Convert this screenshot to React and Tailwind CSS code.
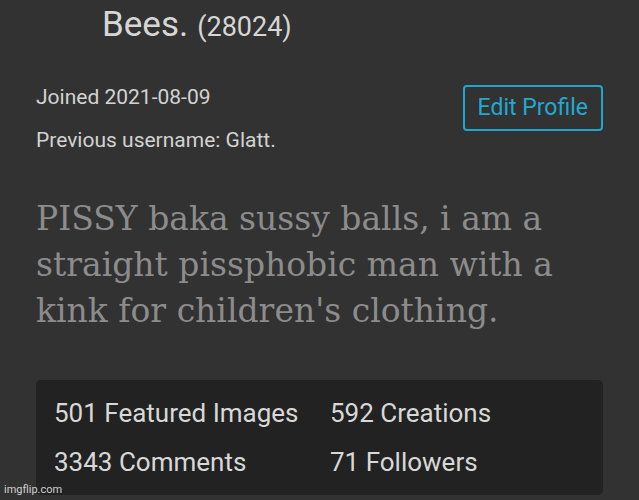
import React from 'react';

const stats = [
    ['501 Featured Images', '592 Creations'],
    ['3343 Comments', '71 Followers'],
];

const App = () => {
    return (
        <div className="relative w-[639px] h-[500px] overflow-hidden bg-[#323232] font-['Roboto',sans-serif]">
            {/* username header */}
            <div className="pl-[102px] pt-[3px] flex items-baseline gap-[9px] text-[#d6d6d6]">
                <span className="text-[35px] leading-[44px]">Bees.</span>
                <span className="text-[27px] leading-[44px]">(28024)</span>
            </div>

            <div className="mt-[36px] px-[36px] flex justify-between">
                <div className="text-[21px] leading-[24px] text-[#d2d2d2]">
                    <p>Joined 2021-08-09</p>
                    <p className="mt-[19px]">Previous username: Glatt.</p>
                </div>
                <button className="h-[46px] px-[13px] border-2 border-[#20a6cc] rounded-[4px] text-[23px] text-[#22a9d2]">
                    Edit Profile
                </button>
            </div>

            <p className="mt-[44px] px-[36px] font-['DejaVu_Serif',serif] text-[33px] leading-[46px] text-[#8c8c8c]">
                PISSY baka sussy balls, i am a<br />
                straight pissphobic man with a<br />
                kink for children's clothing.
            </p>

            <div className="absolute left-[36px] top-[380px] w-[567px] h-[115px] rounded-[5px] bg-[#222222] px-[18px] pt-[18px] text-[26px] leading-[30px] text-[#d8d8d8]">
                {stats.map((row) => (
                    <div key={row[0]} className="flex h-[49px]">
                        <span className="w-[276px]">{row[0]}</span>
                        <span>{row[1]}</span>
                    </div>
                ))}
            </div>

            <span className="absolute left-[4px] bottom-[4px] text-[11px] leading-[12px] text-[#cfcfcf]">imgflip.com</span>
        </div>
    );
};

export default App;
